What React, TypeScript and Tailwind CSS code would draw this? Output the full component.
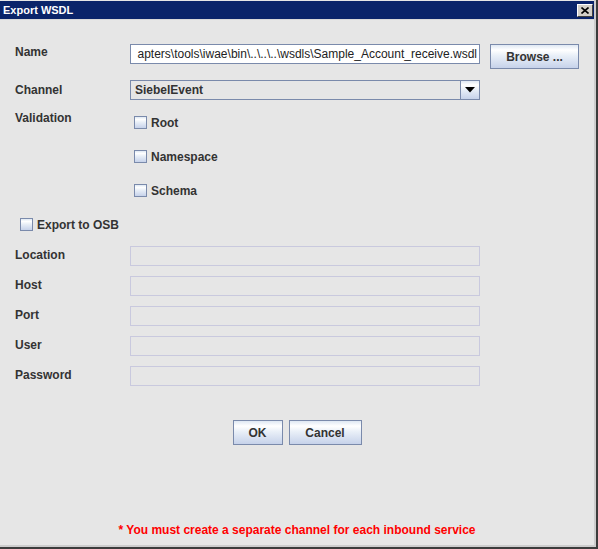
import { useState } from 'react';

const btnBg =
  'bg-[linear-gradient(180deg,#dfe8f3_0%,#ffffff_22%,#eaf0f8_45%,#c6d2ea_100%)]';

function CheckBox({ label, checked, onToggle }: { label: string; checked: boolean; onToggle: () => void }) {
  return (
    <label className="flex items-center gap-[4px] h-[13px] cursor-default select-none" onClick={onToggle}>
      <span className={`w-[13px] h-[13px] border border-[#7a8aab] ${btnBg} flex items-center justify-center shrink-0`}>
        {checked && (
          <svg width="9" height="9" viewBox="0 0 9 9">
            <path d="M1 4.5 L3.5 7 L8 1.5" stroke="#333" strokeWidth="1.6" fill="none" />
          </svg>
        )}
      </span>
      <span className="font-bold text-[12px] leading-[14px] text-[#333333]">{label}</span>
    </label>
  );
}

function DisabledRow({ label }: { label: string }) {
  return (
    <div className="flex items-center h-[20px]">
      <span className="w-[115px] font-bold text-[12px] leading-[14px] text-[#333333] -mt-[3px]">{label}</span>
      <div className="w-[350px] h-[20px] border border-[#c9c9de] bg-[#e6e6e6]" />
    </div>
  );
}

export default function App() {
  const [checks, setChecks] = useState({ root: false, ns: false, schema: false, osb: false });
  const toggle = (k: keyof typeof checks) => setChecks({ ...checks, [k]: !checks[k] });

  return (
    <div
      className="w-[598px] h-[549px] border-r-2 border-b-2 border-[#3c3c3c] overflow-hidden"
      style={{ fontFamily: '"Liberation Sans", Arial, sans-serif' }}
    >
      <div className="w-full h-full border-r-2 border-b-2 border-[#cdcdcd] bg-[#e6e6e6] flex flex-col">
        {/* title bar */}
        <div className="mt-[1px] h-[18px] bg-[#0a246a] flex items-center justify-between pl-[3px] pr-[1px]">
          <span className="text-white font-bold text-[11px] leading-none">Export WSDL</span>
          <div className="w-[16px] h-[13px] bg-[#d4d0c8] border-t border-l border-white border-r border-b border-r-[#404040] border-b-[#404040] flex items-center justify-center">
            <svg width="8" height="7" viewBox="0 0 8 7">
              <path d="M0.5 0.5 L7.5 6.5 M7.5 0.5 L0.5 6.5" stroke="#000" strokeWidth="1.6" />
            </svg>
          </div>
        </div>
        <div className="h-[1px] bg-[#d8d8d8]" />

        <div className="flex flex-col pl-[15px] pt-[24px]">
          {/* Name */}
          <div className="flex items-start">
            <div className="w-[115px] h-[20px] flex items-center -mt-[2px]">
              <span className="font-bold text-[12px] leading-[14px] text-[#333333]">Name</span>
            </div>
            <div className="w-[350px] h-[20px] border border-[#7a8aab] bg-white flex justify-end items-center overflow-hidden pr-[2px]">
              <span className="whitespace-nowrap text-[12px] leading-[14px] text-[#222]">
                apters\tools\iwae\bin\..\..\..\wsdls\Sample_Account_receive.wsdl
              </span>
            </div>
            <button
              className={`ml-[10px] w-[89px] h-[25px] border border-[#7a8aab] ${btnBg} font-bold text-[12px] text-[#333333]`}
            >
              Browse ...
            </button>
          </div>

          {/* Channel */}
          <div className="flex items-center mt-[11px] h-[20px]">
            <span className="w-[115px] font-bold text-[12px] leading-[14px] text-[#333333]">Channel</span>
            <div className="w-[350px] h-[20px] border border-[#7a8aab] bg-[#e6e6e6] flex">
              <div className="flex-1 flex items-center pl-[4px]">
                <span className="font-bold text-[12px] leading-[14px] text-[#333333]">SiebelEvent</span>
              </div>
              <div className={`w-[19px] h-full border-l border-[#7a8aab] ${btnBg} flex items-center justify-center`}>
                <svg width="10" height="6" viewBox="0 0 10 6">
                  <path d="M0 0 H10 L5 5.5 Z" fill="#000" />
                </svg>
              </div>
            </div>
          </div>

          {/* Validation */}
          <div className="flex items-start mt-[11px]">
            <span className="w-[115px] font-bold text-[12px] leading-[14px] text-[#333333]">Validation</span>
            <div className="flex flex-col gap-[21px] mt-[5px] pl-[4px]">
              <CheckBox label="Root" checked={checks.root} onToggle={() => toggle('root')} />
              <CheckBox label="Namespace" checked={checks.ns} onToggle={() => toggle('ns')} />
              <CheckBox label="Schema" checked={checks.schema} onToggle={() => toggle('schema')} />
            </div>
          </div>

          {/* Export to OSB */}
          <div className="mt-[21px] pl-[5px]">
            <CheckBox label="Export to OSB" checked={checks.osb} onToggle={() => toggle('osb')} />
          </div>

          {/* OSB fields */}
          <div className="flex flex-col gap-[10px] mt-[15px]">
            <DisabledRow label="Location" />
            <DisabledRow label="Host" />
            <DisabledRow label="Port" />
            <DisabledRow label="User" />
            <DisabledRow label="Password" />
          </div>
        </div>

        {/* buttons */}
        <div className="flex justify-center gap-[6px] mt-[34px]">
          <button className={`w-[50px] h-[25px] border border-[#7a8aab] ${btnBg} font-bold text-[12px] text-[#333333]`}>
            OK
          </button>
          <button className={`w-[73px] h-[25px] border border-[#7a8aab] ${btnBg} font-bold text-[12px] text-[#333333]`}>
            Cancel
          </button>
        </div>

        <div className="mt-auto mb-[8px] flex justify-center">
          <span className="text-[#ff0000] font-bold text-[12px] leading-[14px]">
            * You must create a separate channel for each inbound service
          </span>
        </div>
      </div>
    </div>
  );
}
